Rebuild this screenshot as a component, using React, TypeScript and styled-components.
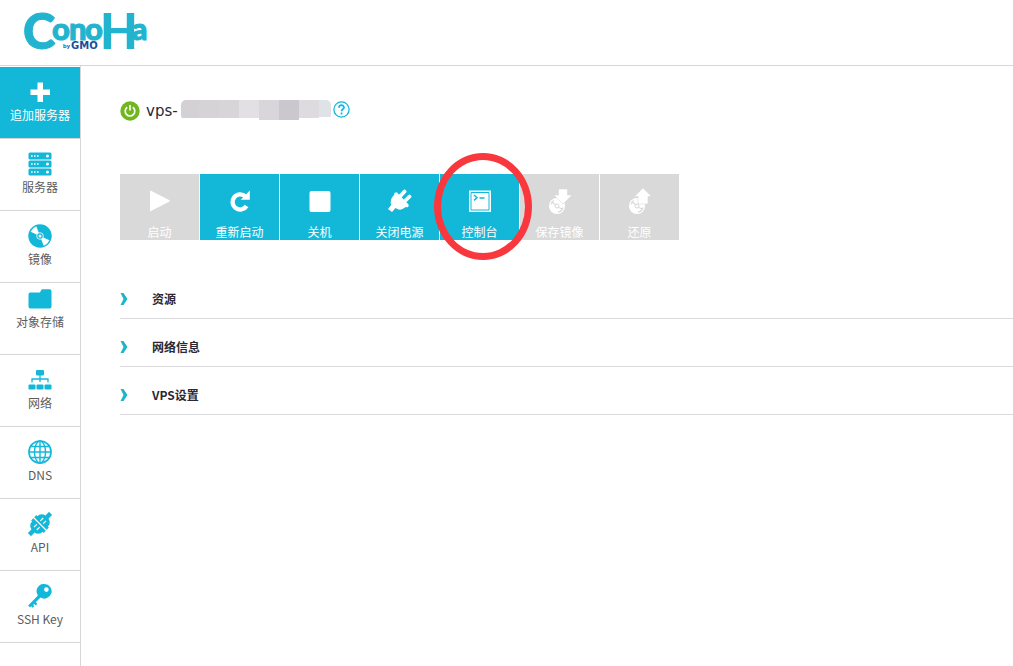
import React from "react";
import styled, { createGlobalStyle, css } from "styled-components";

const cyan = "#13b8d9";
const line = "#d6d6d6";

const GlobalStyle = createGlobalStyle`
  *, *::before, *::after { box-sizing: border-box; }
  html, body, #root { min-height: 100%; }
  body {
    margin: 0;
    background: #fff;
    color: #2b2833;
    font-family: "Noto Sans CJK SC", sans-serif;
    font-size: 12px;
    line-height: 16px;
  }
  button { font: inherit; border: 0; cursor: pointer; }
  svg { display: block; }
`;

const Page = styled.div`
  display: flex;
  flex-direction: column;
  min-height: 100vh;
`;

const Header = styled.header`
  height: 66px;
  padding: 10px 24px 0;
  border-bottom: 1px solid ${line};
`;

const LogoLink = styled.a`
  display: inline-block;
  text-decoration: none;

  svg { overflow: visible; }
`;

const Body = styled.div`
  display: flex;
  flex: 1;
`;

const Sidebar = styled.nav`
  flex: none;
  width: 81px;
  padding-top: 1px;
  border-right: 1px solid ${line};
`;

const SideItem = styled.a<{ $active?: boolean; $raised?: boolean }>`
  display: flex;
  flex-direction: column;
  align-items: center;
  gap: 3px;
  height: 72px;
  padding-top: ${(p) => (p.$raised ? 4 : 13)}px;
  border-bottom: 1px solid ${line};
  color: ${(p) => (p.$active ? "#fff" : "#5c5c5c")};
  background: ${(p) => (p.$active ? cyan : "#fff")};
  text-decoration: none;
  white-space: nowrap;
`;

const SideIcon = styled.span<{ $active?: boolean }>`
  display: block;
  color: ${(p) => (p.$active ? "#fff" : cyan)};
`;

const Main = styled.main`
  flex: 1;
  min-width: 0;
  padding: 34px 0 0 39px;
`;

const TitleRow = styled.div`
  display: flex;
  align-items: center;
  height: 22px;
`;

const ServerName = styled.h1`
  display: flex;
  align-items: center;
  margin: 0 0 0 6px;
  font: 400 15px/22px "DejaVu Sans", sans-serif;
`;

const Mosaic = styled.span`
  display: flex;
  height: 20px;
  margin: 0 2px 3px 3px;
  border-radius: 5px;
  overflow: hidden;
`;

const Tile = styled.span<{ $tone: string; $height: number; $width: number }>`
  width: ${(p) => p.$width}px;
  height: ${(p) => p.$height}px;
  background: ${(p) => p.$tone};
`;

const HelpButton = styled.button`
  padding: 0 0 3px;
  background: none;
  color: ${cyan};
`;

const Toolbar = styled.div`
  display: flex;
  gap: 1px;
  margin-top: 52px;
`;

const ToolButton = styled.button<{ $ringed?: boolean }>`
  position: relative;
  display: flex;
  flex-direction: column;
  align-items: center;
  gap: 10px;
  width: 79px;
  height: 66px;
  padding: 14px 0 0;
  background: ${cyan};
  color: #fff;
  white-space: nowrap;

  &:disabled {
    background: #d9d9d9;
    color: #fff;
    cursor: default;
  }

  ${(p) =>
    p.$ringed &&
    css`
      z-index: 1;
      &::after {
        content: "";
        position: absolute;
        inset: -21px -13px -20px -6px;
        border: 7px solid #f9383d;
        border-radius: 50%;
        pointer-events: none;
      }
    `}
`;

const Sections = styled.div`
  margin-top: 31px;
`;

const SectionButton = styled.button`
  display: flex;
  align-items: center;
  gap: 24px;
  width: 100%;
  height: 48px;
  padding: 8px 0 0;
  border-bottom: 1px solid #d9d9de;
  background: none;
  color: #2b2833;
  font-weight: 700;
  text-align: left;

  svg { color: #1fb5cb; }
`;

type IconProps = { children: React.ReactNode; size?: number };

const Icon = ({ children, size = 24 }: IconProps) => (
  <svg width={size} height={size} viewBox="0 0 24 24" fill="currentColor" aria-hidden="true">
    {children}
  </svg>
);

const Logo = () => (
  <svg width="126" height="54" viewBox="0 0 126 54" role="img" aria-label="ConoHa by GMO">
    <g fill="#22b4cf" stroke="#22b4cf" fontFamily="Lato, sans-serif" fontWeight="900">
      <text x="-1" y="39" fontSize="49" strokeWidth="1">C</text>
      <text y="30" fontSize="31" strokeWidth="1">
        <tspan x="28">o</tspan>
        <tspan x="45">n</tspan>
        <tspan x="61">o</tspan>
      </text>
      <text x="76" y="39" fontSize="49" strokeWidth="0">H</text>
      <text x="108" y="30" fontSize="30" strokeWidth="1">a</text>
    </g>
    <g fill="#174f9c" fontWeight="700">
      <text x="39" y="38" fontSize="6" fontFamily="Liberation Sans, sans-serif">by</text>
      <text x="47" y="39" fontSize="10" fontFamily="DejaVu Sans, sans-serif">GMO</text>
    </g>
  </svg>
);

const PlusIcon = () => (
  <Icon><path d="M9.500 2.500h5.500v7h7v5.500h-7v7H9.500v-7h-7V9.500h7z" /></Icon>
);

const ServerIcon = () => (
  <Icon>
    {[0.5, 8.500, 16.500].map((y) => (
      <g key={y}>
        <rect x="0.500" y={y} width="23" height="7" rx="1.500" />
        <g fill="#fff">
          <rect x="3" y={y + 2.700} width="1.600" height="1.600" />
          <rect x="6" y={y + 2.700} width="1.600" height="1.600" />
          <rect x="9" y={y + 2.700} width="1.600" height="1.600" />
          <circle cx="19.500" cy={y + 3.500} r="1.500" />
        </g>
      </g>
    ))}
  </Icon>
);

const DiscIcon = () => (
  <Icon>
    <circle cx="12" cy="12" r="11.700" />
    <g fill="#fff">
      <path d="M12 12 2.500 7.800A10.400 10.400 0 0 1 8.300 2.300z" />
      <path d="M12 12 21.500 16.200A10.400 10.400 0 0 1 15.700 21.700z" />
    </g>
    <circle cx="12" cy="12" r="3.300" stroke="#fff" strokeWidth="0.800" />
    <circle cx="12" cy="12" r="1.500" fill="#fff" />
  </Icon>
);

const FolderIcon = () => (
  <Icon><path d="M.5 7.500A2 2 0 0 1 2.500 5.500h8.800c1.500 0 1.500-3.300 3-3.300H21.500a2 2 0 0 1 2 2v15.300a2 2 0 0 1-2 2h-19a2 2 0 0 1-2-2z" /></Icon>
);

const NetworkIcon = () => (
  <Icon>
    <rect x="8" y="2" width="8" height="5.500" rx="1" />
    <rect x="0.500" y="16.500" width="7" height="5" rx="1" />
    <rect x="8.500" y="16.500" width="7" height="5" rx="1" />
    <rect x="16.500" y="16.500" width="7" height="5" rx="1" />
    <path d="M12 7v7M4 14.500V11h16v3.500" fill="none" stroke="currentColor" strokeWidth="1.300" />
  </Icon>
);

const GlobeIcon = () => (
  <Icon>
    <g fill="none" stroke="currentColor" strokeWidth="1.400">
      <circle cx="12" cy="12" r="11" strokeWidth="1.700" />
      <ellipse cx="12" cy="12" rx="5.500" ry="11" />
      <path d="M12 1v22M1 12h22M3 6.500h18M3 17.500h18" />
    </g>
  </Icon>
);

const ApiIcon = () => (
  <Icon>
    <g transform="rotate(-45 12 12)">
      <path d="M12.600 3.200h3.200v1.600h2.200q3.500 1.800 3.800 5H27v4.400h-5.200q-.3 3.200-3.800 5h-2.200v1.600h-3.200z" />
      <path d="M11.400 3.200H8.200v1.600H6q-3.500 1.800-3.800 5H-3v4.400h5.200q.3 3.200 3.800 5h2.200v1.600h3.200z" />
      <path d="M5.500 10h4M5.500 14h4M14.500 10h4M14.500 14h4" stroke="#fff" strokeWidth="1.200" />
    </g>
  </Icon>
);

const KeyIcon = () => (
  <Icon>
    <path fillRule="evenodd" d="M16.500 0a7.300 7.300 0 1 1-4 13.500L7.800 18.200l1.600 1.600-1.600 1.600-1.700-1.500-1 1 1.200 1.400-1.700 1.500-1.400-1.500L2 23.500l-1.800-2L9.900 11.400A7.300 7.300 0 0 1 16.500 0zm1.900 3.300a2.300 2.300 0 1 0 0 4.600 2.300 2.300 0 0 0 0-4.600z" />
  </Icon>
);

const PlayIcon = () => <Icon><path d="M2 2.300q0-1 1-.6l18.500 9.500q1 .6 0 1.200L3 22q-1 .5-1-.6z" /></Icon>;

const RestartIcon = () => (
  <Icon>
    <path d="M17.500 7.500A7.600 7.600 0 1 0 18.600 17" fill="none" stroke="currentColor" strokeWidth="4.300" />
    <path d="M21.800 1.500v9.300h-9z" />
  </Icon>
);

const StopIcon = () => <Icon><rect x="1.500" y="2" width="21" height="21" rx="2" /></Icon>;

const PlugIcon = () => (
  <Icon>
    <path d="M8 4.500 19.500 16.500 17 18.500Q12.500 22.500 7.500 19L4 23l-4-3 3.200-4Q1.500 11 5.500 6.500z" />
    <path d="M11 8.500 16.500 2.500M15.500 13.500l6-6" stroke="currentColor" strokeWidth="3.800" strokeLinecap="round" />
    <path d="M8 5 19 16.500" stroke="currentColor" strokeWidth="3.500" strokeLinecap="round" />
  </Icon>
);

const ConsoleIcon = () => (
  <Icon>
    <path d="M1 1.500h22v21.500H1z" />
    <path d="M3 3.500h18v17.500H3z" fill="none" stroke={cyan} strokeWidth="1" />
    <path d="M6 6l3 2.700-3 2.700M11.500 9h5" fill="none" stroke={cyan} strokeWidth="1.500" />
  </Icon>
);

const DiscArrow = ({ up }: { up?: boolean }) => (
  <svg width="26" height="26" viewBox="0 0 26 26" fill="currentColor" aria-hidden="true">
    <circle cx="10" cy="18" r="8" />
    <g fill="none" stroke="#d9d9d9">
      <path d="M4 16.500a6 6 0 0 1 3-4M16 19.500a6 6 0 0 1-5 4.500M5.500 14.500l3.500 2.500M11.500 19.500l4 1.500" strokeWidth="1.100" />
      <circle cx="10" cy="18" r="2" strokeWidth="1" />
    </g>
    <path
      d={up ? "M16 0l8.500 8.500H21V16H11V8.500H7.500z" : "M11.500 1h9v6h4.500L16 16 7 7h4.500z"}
      stroke="#d9d9d9"
      strokeWidth="0.600"
    />
  </svg>
);

const PowerBadge = () => (
  <svg width="20" height="20" viewBox="0 0 20 20" role="img" aria-label="运行中">
    <circle cx="10" cy="10" r="9.700" fill="#6fb71b" />
    <path d="M7.200 6.300a4.800 4.800 0 1 0 5.600 0M10 4v5.500" fill="none" stroke="#fff" strokeWidth="1.700" />
  </svg>
);

const HelpIcon = () => (
  <svg width="17" height="17" viewBox="0 0 17 17" fill="none" stroke="currentColor" aria-hidden="true">
    <circle cx="8.500" cy="8.500" r="7.600" strokeWidth="1.300" />
    <path d="M6 6.800C6 3.300 11 3.500 11 6.500 11 8.300 8.500 8.300 8.500 10.300M8.500 11.600v1.800" strokeWidth="1.700" />
  </svg>
);

const Chevron = () => (
  <svg width="8" height="12" viewBox="0 0 8 12" fill="currentColor" aria-hidden="true">
    <path d="M0.500 0h3L7.500 6l-4 6h-3l3-6z" />
  </svg>
);

const sideItems = [
  { label: "追加服务器", icon: <PlusIcon />, active: true },
  { label: "服务器", icon: <ServerIcon /> },
  { label: "镜像", icon: <DiscIcon /> },
  { label: "对象存储", icon: <FolderIcon />, raised: true },
  { label: "网络", icon: <NetworkIcon /> },
  { label: "DNS", icon: <GlobeIcon /> },
  { label: "API", icon: <ApiIcon /> },
  { label: "SSH Key", icon: <KeyIcon /> },
];

const tools = [
  { label: "启动", icon: <PlayIcon />, disabled: true },
  { label: "重新启动", icon: <RestartIcon /> },
  { label: "关机", icon: <StopIcon /> },
  { label: "关闭电源", icon: <PlugIcon /> },
  { label: "控制台", icon: <ConsoleIcon />, ringed: true },
  { label: "保存镜像", icon: <DiscArrow />, disabled: true },
  { label: "还原", icon: <DiscArrow up />, disabled: true },
];

const ToolIcon = styled.span`
  display: flex;
  align-items: center;
  justify-content: center;
  height: 26px;
`;

const tiles = [
  { tone: "#d4d1d5", width: 18, height: 18 },
  { tone: "#d6d3d7", width: 20, height: 18 },
  { tone: "#d8d5d9", width: 20, height: 18 },
  { tone: "#e2e0e4", width: 20, height: 18 },
  { tone: "#d9d6db", width: 20, height: 20 },
  { tone: "#cbc7cf", width: 20, height: 20 },
  { tone: "#dddbe0", width: 20, height: 18 },
  { tone: "#dfe3e8", width: 12, height: 17 },
];

export default function App() {
  return (
    <Page>
      <GlobalStyle />
      <Header>
        <LogoLink href="#"><Logo /></LogoLink>
      </Header>
      <Body>
        <Sidebar>
          {sideItems.map((item) => (
            <SideItem key={item.label} href="#" $active={item.active} $raised={item.raised}>
              <SideIcon $active={item.active}>{item.icon}</SideIcon>
              {item.label}
            </SideItem>
          ))}
        </Sidebar>
        <Main>
          <TitleRow>
            <PowerBadge />
            <ServerName>
              vps-
              <Mosaic>
                {tiles.map((t, i) => (
                  <Tile key={i} $tone={t.tone} $width={t.width} $height={t.height} />
                ))}
              </Mosaic>
            </ServerName>
            <HelpButton aria-label="帮助"><HelpIcon /></HelpButton>
          </TitleRow>
          <Toolbar>
            {tools.map((tool) => (
              <ToolButton key={tool.label} disabled={tool.disabled} $ringed={tool.ringed}>
                <ToolIcon>{tool.icon}</ToolIcon>
                {tool.label}
              </ToolButton>
            ))}
          </Toolbar>
          <Sections>
            {["资源", "网络信息", "VPS设置"].map((name) => (
              <SectionButton key={name} aria-expanded="false">
                <Chevron />
                {name}
              </SectionButton>
            ))}
          </Sections>
        </Main>
      </Body>
    </Page>
  );
}
